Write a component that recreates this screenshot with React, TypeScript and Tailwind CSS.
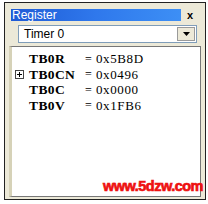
const rows = [
  { name: 'TB0R', value: '0x5B8D', expandable: false },
  { name: 'TB0CN', value: '0x0496', expandable: true },
  { name: 'TB0C', value: '0x0000', expandable: false },
  { name: 'TB0V', value: '0x1FB6', expandable: false },
];

function RegisterRow({ name, value, expandable }: { name: string; value: string; expandable: boolean }) {
  return (
    <div className="flex items-center h-[15.5px] leading-none text-black font-['Liberation_Serif',serif]">
      <div className="w-[14px] flex items-center justify-center">
        {expandable && (
          <div className="w-[9px] h-[9px] border border-[#444] bg-white flex items-center justify-center relative">
            <div className="absolute w-[5px] h-px bg-black" />
            <div className="absolute w-px h-[5px] bg-black" />
          </div>
        )}
      </div>
      <span className="w-[59px] pl-[3px] font-bold text-[13.5px] tracking-[0.4px]">{name}</span>
      <span className="w-[11px] text-[12px]">=</span>
      <span className="text-[13px] tracking-[0.6px]">{value}</span>
    </div>
  );
}

export default function App() {
  return (
    <div className="w-[208px] h-[204px] bg-white pt-[2px] pl-[4px] pr-[2px] pb-[4px] font-['Liberation_Sans',sans-serif]">
      <div className="h-full border border-[#222] bg-[#ece9d8] flex flex-col">
        <div className="flex items-center h-[12px] mt-[6px] ml-[6px] mr-[6px]">
          <div className="flex-1 h-full bg-gradient-to-r from-[#1f5bd6] via-[#2f78ec] to-[#3d8ff5] flex items-center pl-[1px]">
            <span className="text-white text-[12px] leading-none">Register</span>
          </div>
          <span className="w-[18px] text-center text-[11px] font-bold leading-none text-black">x</span>
        </div>
        <div className="mt-[4px] ml-[13px] mr-[8px] h-[18px] bg-white border border-[#7f9db9] flex items-center">
          <span className="flex-1 pl-[5px] text-[12px] leading-none text-black">Timer 0</span>
          <div className="w-[18px] h-[14px] mr-[1px] bg-[#ece9d8] border border-[#9a9a9a] flex items-center justify-center">
            <svg width="7" height="4" viewBox="0 0 7 4">
              <path d="M0 0h7L3.5 4z" fill="#000" />
            </svg>
          </div>
        </div>
        <div className="mt-[3px] ml-[4px] mr-[4px] mb-[2px] flex-1 bg-white border border-[#777] border-l-[3px] border-l-[#d6d2b8] flex flex-col relative">
          <div className="flex flex-col pt-[4px]">
            {rows.map((r) => (
              <RegisterRow key={r.name} {...r} />
            ))}
          </div>
          <div className="absolute right-[-3px] bottom-[3px] text-[#ee1111] text-[14.5px] font-black leading-none tracking-[-0.5px] [-webkit-text-stroke:0.7px_#ee1111] font-['Liberation_Sans',sans-serif]">
            www.5dzw.com
          </div>
        </div>
      </div>
    </div>
  );
}
